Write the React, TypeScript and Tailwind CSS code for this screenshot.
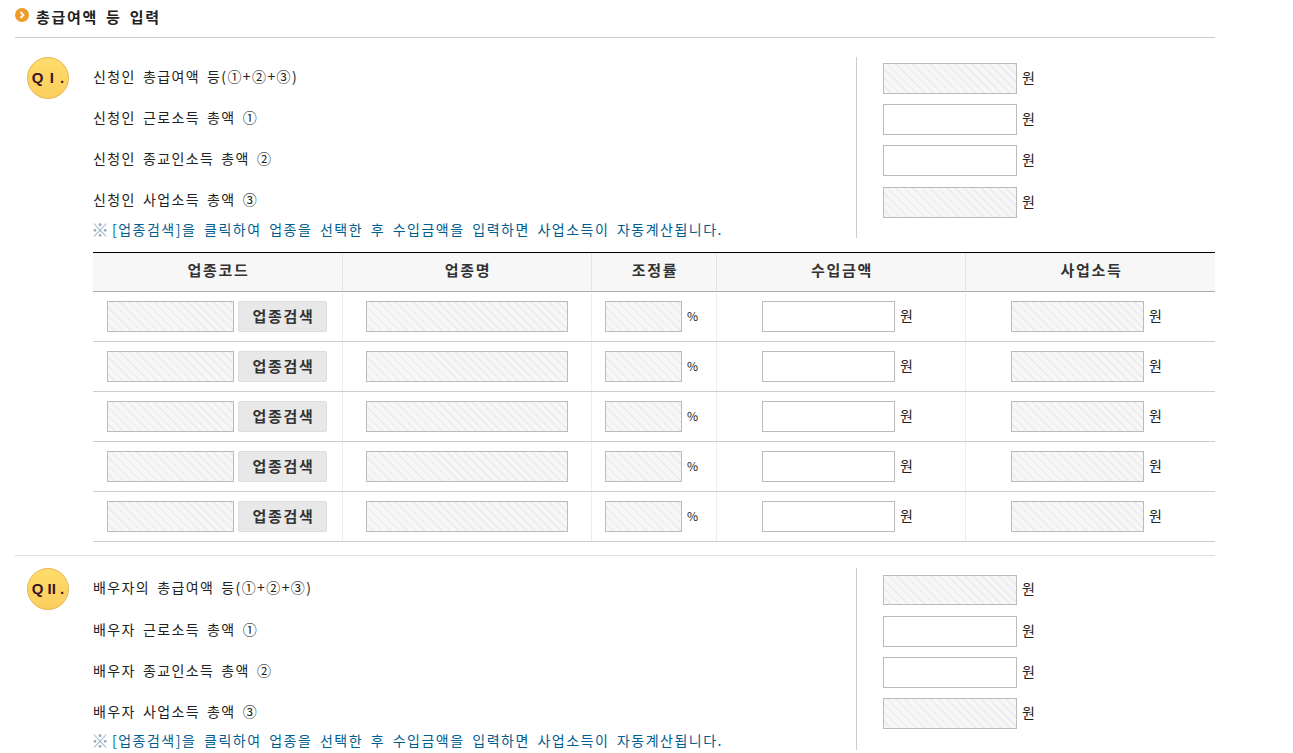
import React from 'react';

const hatched = 'bg-[repeating-linear-gradient(45deg,#f7f7f7_0px,#f7f7f7_4px,#eeeeee_4px,#eeeeee_6px)]';

const Field: React.FC<{ width: string; height?: string; locked?: boolean }> = ({ width, height, locked }) => (
    <div className={`${width} ${height || 'h-[31px]'} shrink-0 border border-[#bbbbbb] ${locked ? hatched : 'bg-white'}`} />
);

const AmountRow: React.FC<{ locked?: boolean; height?: string; className?: string }> = ({ locked, height, className }) => (
    <div className={`flex items-center ${className || ''}`}>
        <Field width="w-[134px]" height={height} locked={locked} />
        <span className="ml-[5px] pb-[3px] text-[14px] text-[#222]">원</span>
    </div>
);

const Badge: React.FC<{ label: string; spacing: string }> = ({ label, spacing }) => (
    <div className={`w-[42px] h-[42px] rounded-full shrink-0 flex items-center justify-center border border-[#e8b64e] bg-gradient-to-b from-[#fedc6c] to-[#fbcf5e] text-[15px] font-bold text-[#3a1420] font-['Liberation_Sans',sans-serif] ${spacing}`}>
        {label}
    </div>
);

// the second block sits a pixel off from the first one in the reference
const QuestionBlock: React.FC<{ badge: string; spacing: string; labels: string[]; second?: boolean }> = ({ badge, spacing, labels, second }) => (
    <div className="flex">
        <div className="w-[78px] pl-[12px]">
            <Badge label={badge} spacing={spacing} />
        </div>
        <div className={`w-[764px] border-r border-[#cccccc] ${second ? 'pb-px' : ''}`}>
            {labels.map((label, i) => (
                <div key={label} className={`h-[41px] flex items-center pb-[2px] text-[14px] tracking-[1.4px] [word-spacing:2.5px] text-[#222] ${second && i === 0 ? 'mb-px' : ''}`}>
                    {label}
                </div>
            ))}
            <div className={`h-[17px] flex items-center text-[14px] tracking-[1.5px] [word-spacing:3px] text-[#005d8f] ${second ? '-mt-px' : ''}`}>
                <span className="w-[19px] -ml-[2px] mr-[2px] text-[18px] font-bold text-[#8fa9c2] tracking-normal">※</span>
                [업종검색]을 클릭하여 업종을 선택한 후 수입금액을 입력하면 사업소득이 자동계산됩니다.
            </div>
        </div>
        <div className={`pl-[26px] flex flex-col gap-[10px] ${second ? 'pt-[7px]' : 'pt-[6px]'}`}>
            <AmountRow locked height={second ? 'h-[30px]' : undefined} className={second ? 'mb-px' : ''} />
            <AmountRow />
            <AmountRow />
            <AmountRow locked className={second ? '' : 'mt-px'} />
        </div>
    </div>
);

const headers = ['업종코드', '업종명', '조정률', '수입금액', '사업소득'];
const columns = 'grid grid-cols-[250px_249px_125px_249px_249px]';

const IncomeRow: React.FC = () => (
    <div className={`${columns} h-[50px] border-b border-[#cccccc] text-[14px] text-[#222]`}>
        <div className="flex items-center pl-[14px] border-r border-[#eeeeee]">
            <Field width="w-[127px]" locked />
            <button className="ml-[4px] w-[89px] h-[31px] pb-px pl-[2px] rounded-[2px] border border-[#dddddd] bg-[#e8e8e8] text-[15px] font-bold tracking-[1.7px] text-[#333]">
                업종검색
            </button>
        </div>
        <div className="flex items-center pl-[23px] border-r border-[#eeeeee]">
            <Field width="w-[202px]" locked />
        </div>
        <div className="flex items-center pl-[13px] border-r border-[#eeeeee]">
            <Field width="w-[77px]" locked />
            <span className="ml-[5px] pb-px text-[12px]">%</span>
        </div>
        <div className="flex items-center pl-[45px] border-r border-[#eeeeee]">
            <Field width="w-[133px]" />
            <span className="ml-[5px] pb-[2px]">원</span>
        </div>
        <div className="flex items-center pl-[45px]">
            <Field width="w-[133px]" locked />
            <span className="ml-[5px] pb-[2px]">원</span>
        </div>
    </div>
);

const App: React.FC = () => {
    return (
        <div className="h-[753px] overflow-hidden bg-white pl-[15px] font-['Noto_Sans_CJK_KR','Liberation_Sans',sans-serif]">
            <div className="w-[1200px]">
                <div className="h-[38px] border-b border-[#cccccc] flex items-start pt-[8px]">
                    <svg className="w-[15px] h-[15px]" viewBox="0 0 15 15">
                        <circle cx="7" cy="7" r="7" fill="#f09a28" />
                        <path d="M5.5 4 L8.5 7 L5.5 10" fill="none" stroke="#fff" strokeWidth="1.8" />
                    </svg>
                    <h1 className="ml-[6px] text-[15px] leading-[17px] font-bold tracking-[1.7px] [word-spacing:3px] text-[#222]">총급여액 등 입력</h1>
                </div>

                <div className="mt-[19px]">
                    <QuestionBlock
                        badge="Q I ."
                        spacing="[word-spacing:2px]"
                        labels={[
                            '신청인 총급여액 등(①+②+③)',
                            '신청인 근로소득 총액 ①',
                            '신청인 종교인소득 총액 ②',
                            '신청인 사업소득 총액 ③',
                        ]}
                    />
                </div>

                <div className="mt-[14px] ml-[78px]">
                    <div className={`${columns} h-[40px] border-t border-black bg-[#f7f7f7]`}>
                        {headers.map((h, i) => (
                            <div key={h} className={`flex items-center justify-center pb-[3px] pl-[2px] border-b border-b-[#aaaaaa] text-[15px] font-bold tracking-[1.7px] text-[#333] ${i < 4 ? 'border-r border-r-[#e5e5e5]' : ''}`}>
                                {h}
                            </div>
                        ))}
                    </div>
                    <IncomeRow />
                    <IncomeRow />
                    <IncomeRow />
                    <IncomeRow />
                    <IncomeRow />
                </div>

                <div className="mt-[13px] pt-[12px] border-t border-[#dddddd]">
                    <QuestionBlock
                        second
                        badge="Q II ."
                        spacing=""
                        labels={[
                            '배우자의 총급여액 등(①+②+③)',
                            '배우자 근로소득 총액 ①',
                            '배우자 종교인소득 총액 ②',
                            '배우자 사업소득 총액 ③',
                        ]}
                    />
                </div>
            </div>
        </div>
    );
};

export default App;
